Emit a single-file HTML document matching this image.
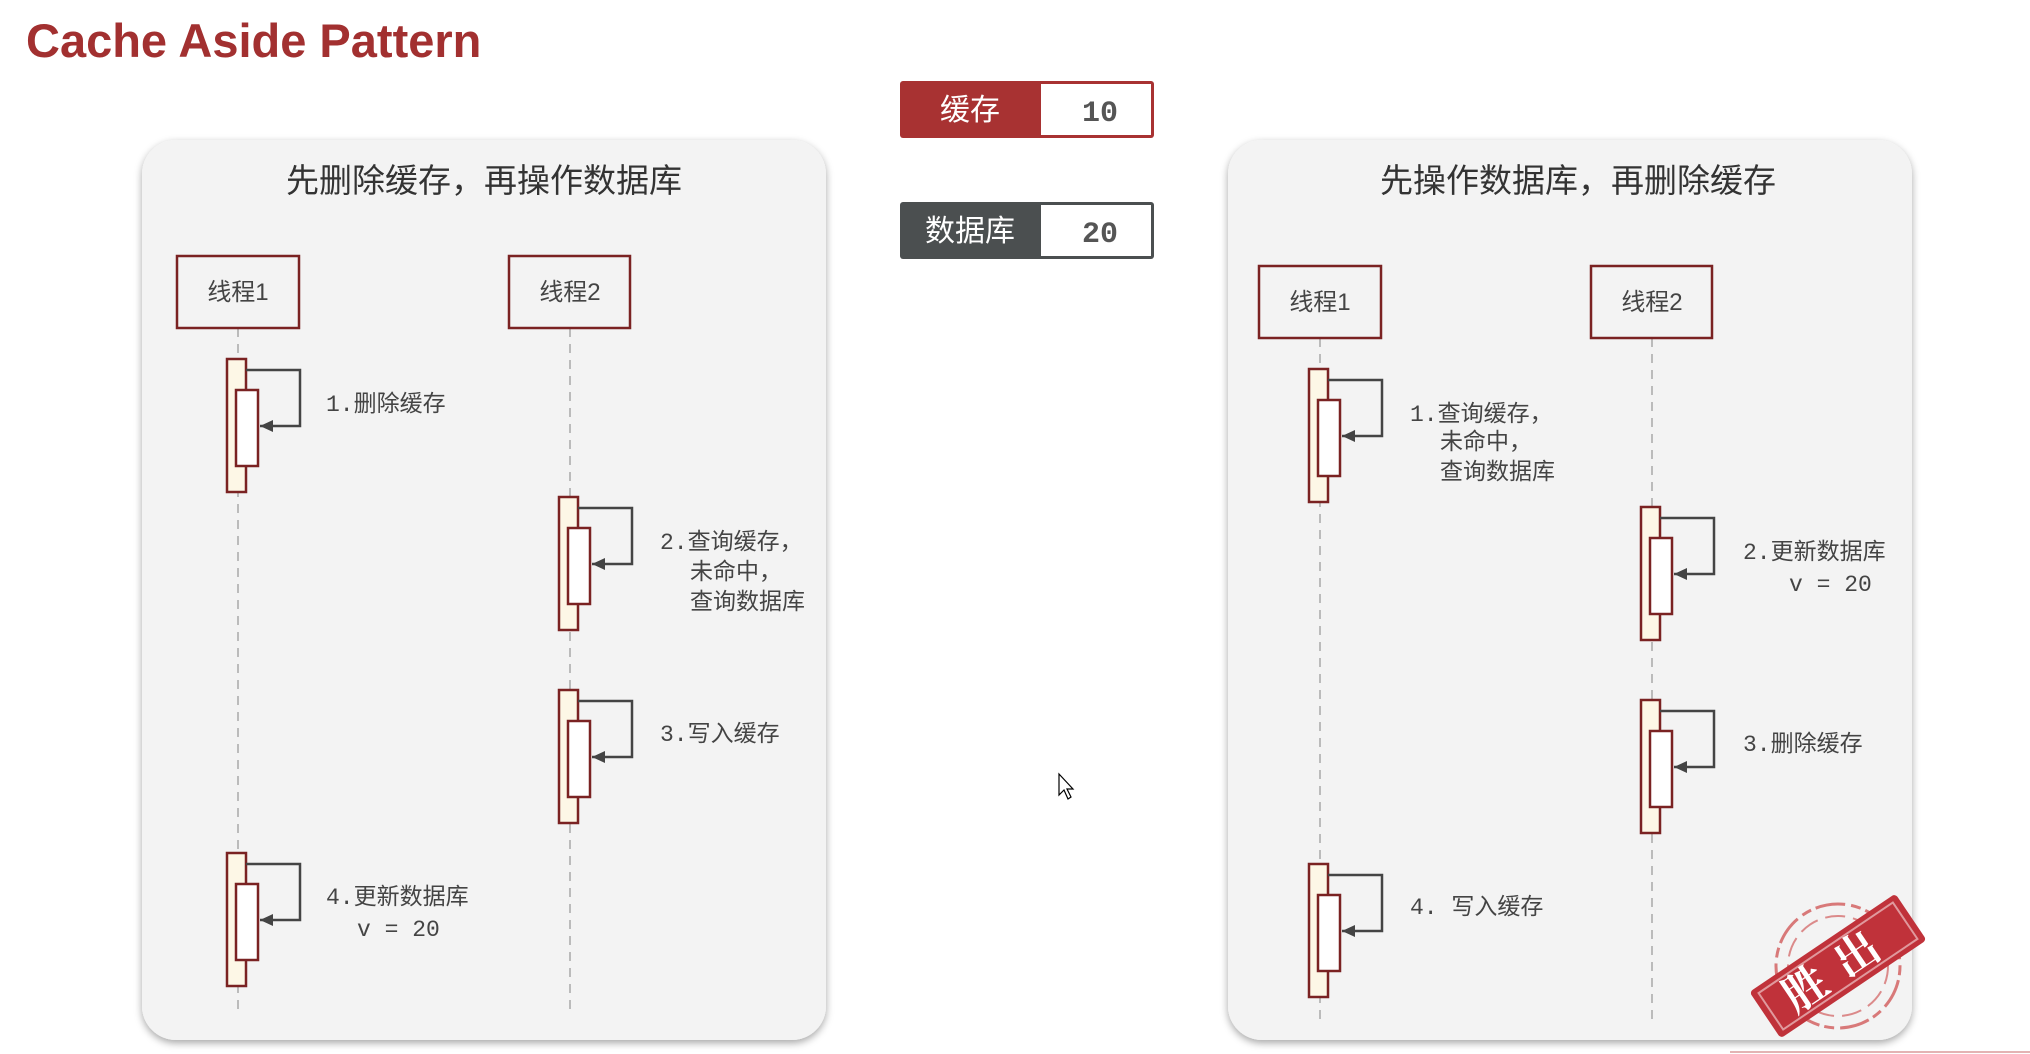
<!DOCTYPE html>
<html><head><meta charset="utf-8"><style>
html,body{margin:0;padding:0;background:#fff;width:2030px;height:1054px;overflow:hidden}
svg{display:block}
.m{font-family:"Liberation Mono","Noto Sans CJK SC",monospace;font-size:23px;fill:#444}
.c{font-family:"Liberation Sans","Noto Sans CJK SC",sans-serif}
</style></head><body>
<svg width="2030" height="1054" viewBox="0 0 2030 1054" xmlns="http://www.w3.org/2000/svg">
<defs>
<filter id="sh" x="-5%" y="-5%" width="110%" height="110%"><feDropShadow dx="0" dy="3" stdDeviation="4" flood-color="#000" flood-opacity="0.35"/></filter>
<marker id="ar" markerUnits="userSpaceOnUse" markerWidth="14" markerHeight="14" refX="13" refY="7" orient="auto"><path d="M0,1 L13,7 L0,13 z" fill="#444"/></marker>
</defs>
<text x="26" y="57" class="c" font-size="47" font-weight="bold" fill="#a23030">Cache Aside Pattern</text>

<rect x="142" y="140" width="684" height="900" rx="34" fill="#f3f3f3" filter="url(#sh)"/>
<rect x="1228" y="140" width="684" height="900" rx="34" fill="#f3f3f3" filter="url(#sh)"/>
<text x="484" y="192" text-anchor="middle" class="c" font-size="33" fill="#333">先删除缓存，再操作数据库</text>
<text x="1578" y="192" text-anchor="middle" class="c" font-size="33" fill="#333">先操作数据库，再删除缓存</text>

<rect x="900" y="81" width="254" height="57" rx="3" fill="#a83232"/>
<rect x="1041" y="84" width="110" height="51" fill="#fff"/>
<text x="970" y="120" text-anchor="middle" class="c" font-size="30" fill="#fff">缓存</text>
<text x="1100" y="121" text-anchor="middle" font-family="Liberation Mono,monospace" font-weight="bold" font-size="30" fill="#555">10</text>
<rect x="900" y="202" width="254" height="57" rx="3" fill="#4b4f50"/>
<rect x="1041" y="205" width="110" height="51" fill="#fff"/>
<text x="970" y="241" text-anchor="middle" class="c" font-size="30" fill="#fff">数据库</text>
<text x="1100" y="242" text-anchor="middle" font-family="Liberation Mono,monospace" font-weight="bold" font-size="30" fill="#555">20</text>

<g stroke="#bbb" stroke-width="2" stroke-dasharray="9,7">
<line x1="238" y1="328" x2="238" y2="1012"/><line x1="570" y1="328" x2="570" y2="1012"/>
<line x1="1320" y1="338" x2="1320" y2="1022"/><line x1="1652" y1="338" x2="1652" y2="1022"/>
</g>
<g fill="#f3f3f3" stroke="#7a2222" stroke-width="2.5">
<rect x="177" y="256" width="122" height="72"/><rect x="509" y="256" width="121" height="72"/>
<rect x="1259" y="266" width="122" height="72"/><rect x="1591" y="266" width="121" height="72"/>
</g>
<g class="c" font-size="24" fill="#444" text-anchor="middle">
<text x="238" y="300">线程1</text><text x="570" y="300">线程2</text>
<text x="1320" y="310">线程1</text><text x="1652" y="310">线程2</text>
</g>

<g stroke-width="2.5">
<g transform="translate(238,359)"><rect x="-11" y="0" width="19" height="133" fill="#fdf7e6" stroke="#7a2222"/><rect x="-2" y="31" width="22" height="76" fill="#fff" stroke="#7a2222"/><path d="M8,11 H62 V67 H22" fill="none" stroke="#444" marker-end="url(#ar)"/></g>
<g transform="translate(570,497)"><rect x="-11" y="0" width="19" height="133" fill="#fdf7e6" stroke="#7a2222"/><rect x="-2" y="31" width="22" height="76" fill="#fff" stroke="#7a2222"/><path d="M8,11 H62 V67 H22" fill="none" stroke="#444" marker-end="url(#ar)"/></g>
<g transform="translate(570,690)"><rect x="-11" y="0" width="19" height="133" fill="#fdf7e6" stroke="#7a2222"/><rect x="-2" y="31" width="22" height="76" fill="#fff" stroke="#7a2222"/><path d="M8,11 H62 V67 H22" fill="none" stroke="#444" marker-end="url(#ar)"/></g>
<g transform="translate(238,853)"><rect x="-11" y="0" width="19" height="133" fill="#fdf7e6" stroke="#7a2222"/><rect x="-2" y="31" width="22" height="76" fill="#fff" stroke="#7a2222"/><path d="M8,11 H62 V67 H22" fill="none" stroke="#444" marker-end="url(#ar)"/></g>
<g transform="translate(1320,369)"><rect x="-11" y="0" width="19" height="133" fill="#fdf7e6" stroke="#7a2222"/><rect x="-2" y="31" width="22" height="76" fill="#fff" stroke="#7a2222"/><path d="M8,11 H62 V67 H22" fill="none" stroke="#444" marker-end="url(#ar)"/></g>
<g transform="translate(1652,507)"><rect x="-11" y="0" width="19" height="133" fill="#fdf7e6" stroke="#7a2222"/><rect x="-2" y="31" width="22" height="76" fill="#fff" stroke="#7a2222"/><path d="M8,11 H62 V67 H22" fill="none" stroke="#444" marker-end="url(#ar)"/></g>
<g transform="translate(1652,700)"><rect x="-11" y="0" width="19" height="133" fill="#fdf7e6" stroke="#7a2222"/><rect x="-2" y="31" width="22" height="76" fill="#fff" stroke="#7a2222"/><path d="M8,11 H62 V67 H22" fill="none" stroke="#444" marker-end="url(#ar)"/></g>
<g transform="translate(1320,864)"><rect x="-11" y="0" width="19" height="133" fill="#fdf7e6" stroke="#7a2222"/><rect x="-2" y="31" width="22" height="76" fill="#fff" stroke="#7a2222"/><path d="M8,11 H62 V67 H22" fill="none" stroke="#444" marker-end="url(#ar)"/></g>
</g>

<text class="m" x="326" y="411">1.删除缓存</text>
<text class="m" x="660" y="549">2.查询缓存，</text>
<text class="m" x="690" y="579">未命中，</text>
<text class="m" x="690" y="609">查询数据库</text>
<text class="m" x="660" y="741">3.写入缓存</text>
<text class="m" x="326" y="904">4.更新数据库</text>
<text class="m" x="357" y="936">v = 20</text>

<text class="m" x="1410" y="421">1.查询缓存，</text>
<text class="m" x="1440" y="449">未命中，</text>
<text class="m" x="1440" y="479">查询数据库</text>
<text class="m" x="1743" y="559">2.更新数据库</text>
<text class="m" x="1789" y="591">v = 20</text>
<text class="m" x="1743" y="751">3.删除缓存</text>
<text class="m" x="1410" y="914">4. 写入缓存</text>

<g transform="translate(1838,966) rotate(-34)">
<circle r="62" fill="none" stroke="#c44" stroke-width="3" stroke-dasharray="30,6,10,5" opacity="0.7"/>
<circle r="50" fill="none" stroke="#c44" stroke-width="2" stroke-dasharray="20,8" opacity="0.6"/>
<rect x="-88" y="-28" width="176" height="56" rx="4" fill="#c0323a"/>
<rect x="-81" y="-22" width="162" height="44" fill="none" stroke="#fff" stroke-width="2" opacity="0.5"/>
<text x="0" y="16" text-anchor="middle" font-family="Noto Serif CJK SC,serif" font-weight="bold" font-size="44" fill="#fff" letter-spacing="18">胜出</text>
</g>

<path d="M1059,774 L1059,795 L1064,790 L1068,799 L1071,797 L1067,789 L1073,789 Z" fill="#fff" stroke="#000" stroke-width="1.2"/>
<line x1="1730" y1="1052" x2="2030" y2="1052" stroke="#e3b3b3" stroke-width="2"/>
</svg>
</body></html>
